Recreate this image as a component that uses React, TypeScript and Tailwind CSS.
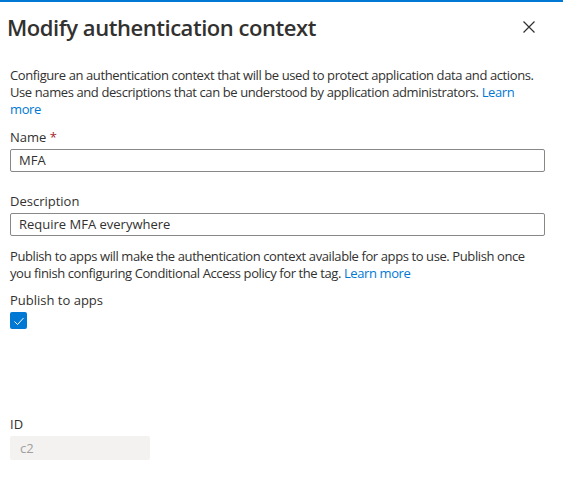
import React from 'react';

const font = { fontFamily: '"Open Sans", "Noto Sans", sans-serif' };

export default function App() {
  return (
    <div className="w-[563px] h-[478px] bg-white text-[#323130] text-[13px] overflow-hidden" style={font}>
      <div className="h-[2px] bg-[#0078d4]" />
      {/* Header */}
      <div className="flex items-center justify-between pl-[7px] pr-[22px] pt-[10px]">
        <h1 className="text-[22px] font-semibold leading-[30px] tracking-[-0.45px]">Modify authentication context</h1>
        <button className="w-6 h-6 flex items-center justify-center text-[#323130]">
          <svg width="14" height="14" viewBox="0 0 14 14" fill="none" stroke="currentColor" strokeWidth="1.2">
            <path d="M1.5 1.5 L12.5 12.5 M12.5 1.5 L1.5 12.5" />
          </svg>
        </button>
      </div>

      <div className="px-[10px] pt-[25px] flex flex-col">
        <p className="leading-[17px] tracking-[-0.4px]">
          Configure an authentication context that will be used to protect application data and actions.<br />
          Use names and descriptions that can be understood by application administrators.{' '}
          <a className="text-[#0078d4]">Learn</a>
          <br />
          <a className="text-[#0078d4]">more</a>
        </p>

        <label className="mt-[11px] leading-[17px]">
          Name <span className="text-[#a4262c]">*</span>
        </label>
        <div className="mt-[3px] w-[535px] h-[23px] border border-[#8a8886] rounded-[2px] flex items-center px-[8px] leading-none">
          MFA
        </div>

        <label className="mt-[21px] leading-[17px]">Description</label>
        <div className="mt-[3px] w-[535px] h-[23px] border border-[#8a8886] rounded-[2px] flex items-center px-[8px] leading-none">
          Require MFA everywhere
        </div>

        <p className="mt-[12px] leading-[17px] tracking-[-0.4px]">
          Publish to apps will make the authentication context available for apps to use. Publish once<br />
          you finish configuring Conditional Access policy for the tag.{' '}
          <a className="text-[#0078d4]">Learn more</a>
        </p>

        <label className="mt-[10px] leading-[17px]">Publish to apps</label>
        <div className="mt-[3px] w-[17px] h-[17px] rounded-[2px] bg-[#0078d4] flex items-center justify-center">
          <svg width="12" height="12" viewBox="0 0 12 12" fill="none" stroke="white" strokeWidth="1">
            <path d="M1.5 6.5 L4.5 9.5 L10.5 3" />
          </svg>
        </div>

        <label className="mt-[87px] leading-[17px]">ID</label>
        <div className="mt-[3px] w-[140px] h-[24px] bg-[#f3f2f1] rounded-[2px] flex items-center px-[10px] text-[#a19f9d] leading-none">
          c2
        </div>
      </div>
    </div>
  );
}
